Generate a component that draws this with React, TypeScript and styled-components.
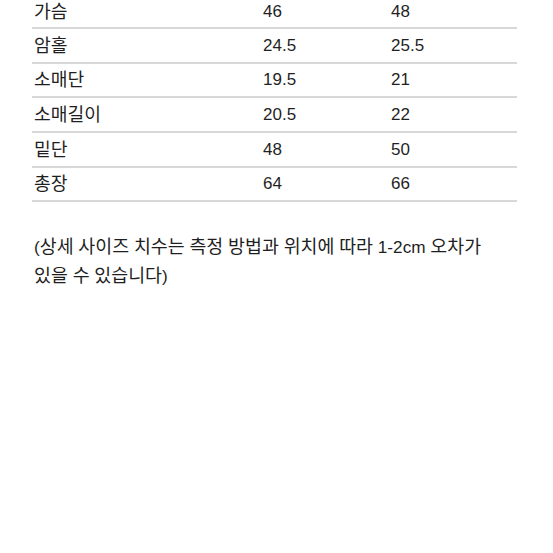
import styled, { createGlobalStyle } from "styled-components";

const GlobalStyle = createGlobalStyle`
  html, body {
    margin: 0;
    padding: 0;
    background: #ffffff;
  }
  body {
    font-family: "Liberation Sans", "Noto Sans CJK KR", sans-serif;
    color: #1f1f1f;
  }
`;

type SizeRow = {
  label: string;
  small: string;
  large: string;
};

const rows: SizeRow[] = [
  { label: "가슴", small: "46", large: "48" },
  { label: "암홀", small: "24.5", large: "25.5" },
  { label: "소매단", small: "19.5", large: "21" },
  { label: "소매길이", small: "20.5", large: "22" },
  { label: "밑단", small: "48", large: "50" },
  { label: "총장", small: "64", large: "66" },
];

// hangul is set a touch larger than latin, like the original's system font
function Text({ children }: { children: string }) {
  const parts = children.split(/([\uAC00-\uD7A3]+)/);
  return (
    <>
      {parts.map((part, index) =>
        /[\uAC00-\uD7A3]/.test(part) ? (
          <Hangul key={index}>{part}</Hangul>
        ) : (
          part
        )
      )}
    </>
  );
}

function App() {
  return (
    <>
      <GlobalStyle />
      <Page>
        <Table>
          {rows.map((row) => (
            <Row key={row.label}>
              <Cell>
                <Text>{row.label}</Text>
              </Cell>
              <Cell>{row.small}</Cell>
              <Cell>{row.large}</Cell>
            </Row>
          ))}
        </Table>
        <Note>
          <Text>
            (상세 사이즈 치수는 측정 방법과 위치에 따라 1-2cm 오차가 있을 수 있습니다)
          </Text>
        </Note>
      </Page>
    </>
  );
}

const Page = styled.div`
  width: 553px;
  height: 553px;
  overflow: hidden;
  padding-left: 32px;
  box-sizing: border-box;
`;

const Table = styled.div`
  width: 485px;
  margin-top: -5px;
`;

const Row = styled.div`
  display: grid;
  grid-template-columns: 229px 128px 1fr;
  align-items: center;
  height: 34.67px;
  box-sizing: border-box;
  padding-left: 2px;
  border-bottom: 2px solid #d8d8d8;

  &:first-child {
    height: 34px;
  }
`;

const Cell = styled.div`
  font-size: 17px;
  line-height: 20px;
  padding-top: 1px;
  white-space: nowrap;
`;

const Hangul = styled.span`
  font-family: "Noto Sans CJK KR", sans-serif;
  font-size: 1.07em;
  line-height: 1;
`;

const Note = styled.p`
  margin: 31px 0 0;
  padding-left: 2px;
  width: 470px;
  font-size: 17.2px;
  line-height: 28.5px;
  word-break: keep-all;
`;

export default App;
